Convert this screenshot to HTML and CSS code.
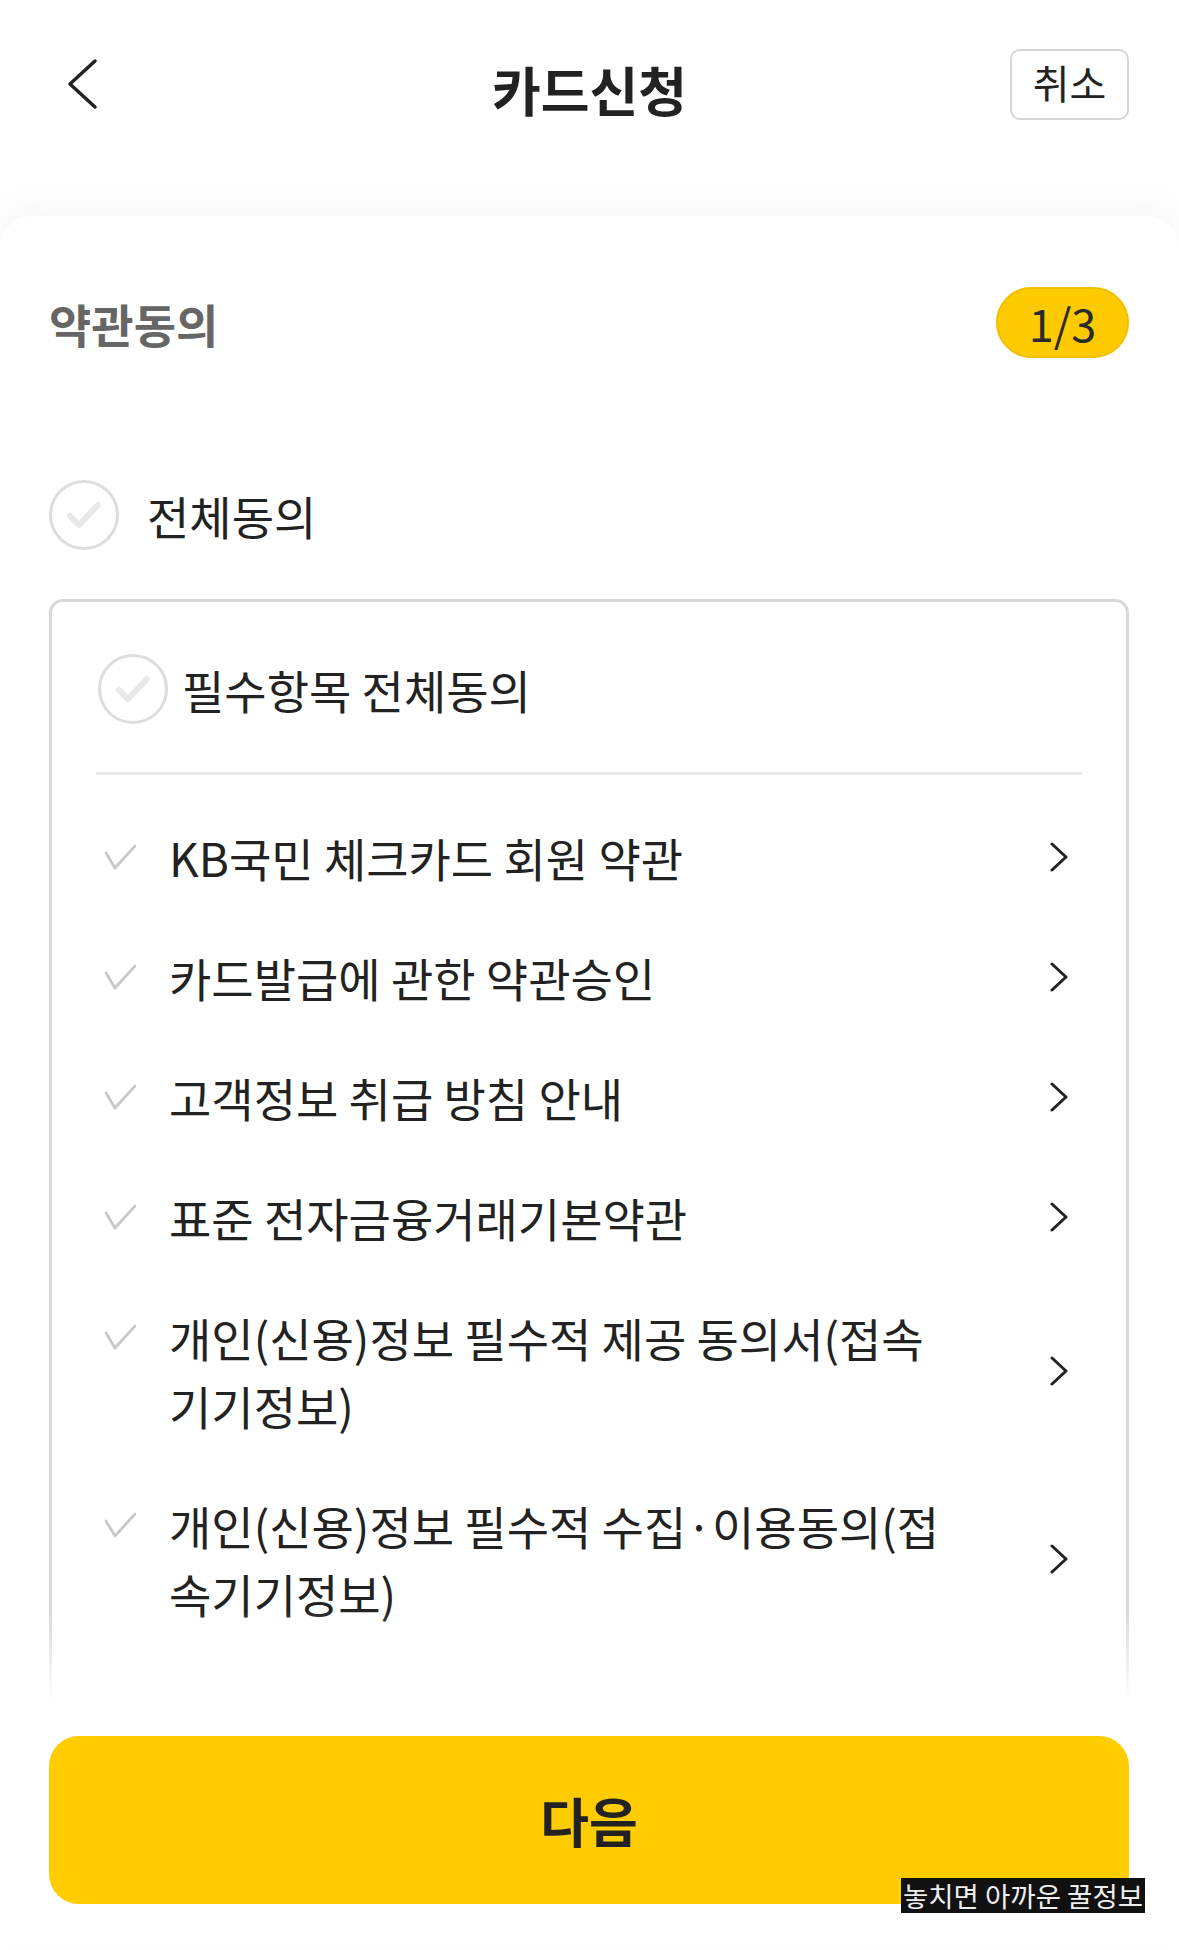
FILE: index.html
```html
<html>
<head>
<meta http-equiv="content-type" content="text/html; charset=utf-8">
<meta name="viewport" content="width=device-width, initial-scale=1">
<link rel="stylesheet" href="styles.css">
<title>카드신청</title>
</head>
<body>
<div class=top>
<a class=back href="#"><svg width="32" height="52" viewBox="0 0 32 52"><path d="M29 3 L4 26 L29 49" fill="none" stroke="#222" stroke-width="3.5" stroke-linecap="round" stroke-linejoin="round"/></svg></a>
<div class=title>카드신청</div>
<button class=cancel>취소</button>
</div>
<div class=sheet>
<div class=sectionhead>
<h1>약관동의</h1>
<span class=step>1/3</span>
</div>
<div class=agreeall>
<svg class=circ width="70" height="70" viewBox="0 0 70 70"><circle cx="35" cy="35" r="33.5" fill="none" stroke="#dddddd" stroke-width="3"/><path d="M21 36 L30 45 L49 25" fill="none" stroke="#e8e8e8" stroke-width="6" stroke-linecap="round" stroke-linejoin="round"/></svg>
<span>전체동의</span>
</div>
<div class=viewport>
<div class=terms>
<div class=agreereq>
<svg class=circ width="70" height="70" viewBox="0 0 70 70"><circle cx="35" cy="35" r="33.5" fill="none" stroke="#dddddd" stroke-width="3"/><path d="M21 36 L30 45 L49 25" fill="none" stroke="#e8e8e8" stroke-width="6" stroke-linecap="round" stroke-linejoin="round"/></svg>
<span>필수항목 전체동의</span>
</div>
<ul class=termlist>
<li><svg class=tick width="32" height="26" viewBox="0 0 32 26"><path d="M2 9 L11 24 L31 2" fill="none" stroke="#c8c8c8" stroke-width="2.8" stroke-linecap="round" stroke-linejoin="round"/></svg><span class=tname>KB국민 체크카드 회원 약관</span><svg class=go width="22" height="30" viewBox="0 0 22 30"><path d="M4 2 L18 15 L4 28" fill="none" stroke="#222" stroke-width="3" stroke-linecap="round" stroke-linejoin="round"/></svg></li>
<li><svg class=tick width="32" height="26" viewBox="0 0 32 26"><path d="M2 9 L11 24 L31 2" fill="none" stroke="#c8c8c8" stroke-width="2.8" stroke-linecap="round" stroke-linejoin="round"/></svg><span class=tname>카드발급에 관한 약관승인</span><svg class=go width="22" height="30" viewBox="0 0 22 30"><path d="M4 2 L18 15 L4 28" fill="none" stroke="#222" stroke-width="3" stroke-linecap="round" stroke-linejoin="round"/></svg></li>
<li><svg class=tick width="32" height="26" viewBox="0 0 32 26"><path d="M2 9 L11 24 L31 2" fill="none" stroke="#c8c8c8" stroke-width="2.8" stroke-linecap="round" stroke-linejoin="round"/></svg><span class=tname>고객정보 취급 방침 안내</span><svg class=go width="22" height="30" viewBox="0 0 22 30"><path d="M4 2 L18 15 L4 28" fill="none" stroke="#222" stroke-width="3" stroke-linecap="round" stroke-linejoin="round"/></svg></li>
<li><svg class=tick width="32" height="26" viewBox="0 0 32 26"><path d="M2 9 L11 24 L31 2" fill="none" stroke="#c8c8c8" stroke-width="2.8" stroke-linecap="round" stroke-linejoin="round"/></svg><span class=tname>표준 전자금융거래기본약관</span><svg class=go width="22" height="30" viewBox="0 0 22 30"><path d="M4 2 L18 15 L4 28" fill="none" stroke="#222" stroke-width="3" stroke-linecap="round" stroke-linejoin="round"/></svg></li>
<li><svg class=tick width="32" height="26" viewBox="0 0 32 26"><path d="M2 9 L11 24 L31 2" fill="none" stroke="#c8c8c8" stroke-width="2.8" stroke-linecap="round" stroke-linejoin="round"/></svg><span class=tname>개인(신용)정보 필수적 제공 동의서(접속기기정보)</span><svg class=go width="22" height="30" viewBox="0 0 22 30"><path d="M4 2 L18 15 L4 28" fill="none" stroke="#222" stroke-width="3" stroke-linecap="round" stroke-linejoin="round"/></svg></li>
<li><svg class=tick width="32" height="26" viewBox="0 0 32 26"><path d="M2 9 L11 24 L31 2" fill="none" stroke="#c8c8c8" stroke-width="2.8" stroke-linecap="round" stroke-linejoin="round"/></svg><span class=tname>개인(신용)정보 필수적 수집·이용동의(접속기기정보)</span><svg class=go width="22" height="30" viewBox="0 0 22 30"><path d="M4 2 L18 15 L4 28" fill="none" stroke="#222" stroke-width="3" stroke-linecap="round" stroke-linejoin="round"/></svg></li>
</ul>
</div>
</div>
<div class=footer>
<button class=next>다음</button>
</div>
</div>
<div class=mark>놓치면 아까운 꿀정보</div>
</body>
</html>
```

FILE: styles.css
```css
html{background:#fff}
body{margin:0;font-family:"Noto Sans CJK KR","Noto Sans",sans-serif;color:#222;background:#fff}
button{font-family:inherit;cursor:pointer}

/* header */
.top{display:grid;grid-template-columns:1fr auto 1fr;align-items:center;height:72px;padding:48px 50px 96px 50px}
.back{display:flex;align-items:center;margin-left:16px}
.title{font-size:53px;font-weight:bold;color:#222;line-height:72px;position:relative;top:5px}
.cancel{justify-self:end;width:119px;height:71px;border:2px solid #d6d6d6;border-radius:10px;background:#fff;font-size:40px;line-height:1;color:#222;padding:0 0 4px 0}

/* card */
.sheet{background:#fff;border-radius:32px 32px 0 0;box-shadow:0 -14px 30px rgba(0,0,0,0.035);padding:0 50px 0 49px}
.sectionhead{display:flex;justify-content:space-between;align-items:center;padding-top:71px}
.sectionhead h1{margin:0;font-size:46px;font-weight:bold;color:#666;line-height:1}
.step{display:flex;align-items:center;justify-content:center;box-sizing:border-box;width:133px;height:71px;border-radius:36px;background:#fdca00;border:2px solid #f0bf00;font-size:45px;color:#2a2a2a}

.agreeall{display:flex;align-items:center;gap:28px;margin-top:122px;font-size:46px;color:#222}
.circ{flex:none;display:block}

/* terms box */
.viewport{position:relative;height:1112px;overflow:hidden;margin-top:49px}
.viewport::after{content:"";position:absolute;left:0;right:0;bottom:0;height:100px;background:linear-gradient(rgba(255,255,255,0),#fff 90%)}
.terms{border:3px solid #d9d9d9;border-radius:14px;padding:52px 44px 200px 44px}
.agreereq{display:flex;align-items:center;gap:14px;padding:0 0 48px 2px;border-bottom:3px solid #e8e8e8;font-size:46px;color:#222}
.termlist{list-style:none;margin:22px 0 0 0;padding:0}
.termlist li{display:flex;align-items:center;padding:26px 0}
.tick{flex:none;align-self:flex-start;margin:21px 33px 0 8px}
.tname{flex:1;max-width:780px;font-size:46px;line-height:68px;color:#222}
.go{flex:none;margin-left:auto;margin-right:12px}

/* bottom */
.footer{padding:25px 0 45px 0}
.next{display:block;width:100%;height:168px;border:0;border-radius:30px;background:#ffcc00;font-size:53px;font-weight:bold;color:#222}

.mark{position:absolute;left:901px;top:1878px;height:35px;line-height:35px;padding:0 2px;background:#111;color:#eee;font-size:27.5px;white-space:nowrap}
```
